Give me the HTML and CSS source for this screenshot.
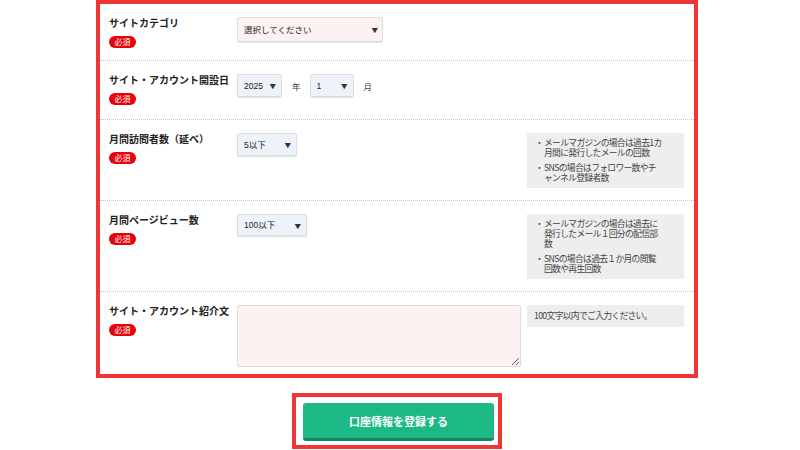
FILE: index.html
```html
<!DOCTYPE html>
<html>
<head>
  <title>サイト情報登録</title>
  <link rel="stylesheet" href="styles.css">
</head>
<body>
  <div class="page">
    <div class="form-box">

      <div class="row">
        <div class="label">
          <p class="label-text">サイトカテゴリ</p>
          <span class="badge">必須</span>
        </div>
        <div class="field">
          <div class="select sel-cat pink">
            <select><option>選択してください</option></select>
          </div>
        </div>
      </div>

      <div class="row row-date">
        <div class="label">
          <p class="label-text">サイト・アカウント開設日</p>
          <span class="badge">必須</span>
        </div>
        <div class="field date-field">
          <div class="select sel-year">
            <select><option>2025</option></select>
          </div>
          <span class="unit">年</span>
          <div class="select sel-month">
            <select><option>1</option></select>
          </div>
          <span class="unit">月</span>
        </div>
      </div>

      <div class="row">
        <div class="label">
          <p class="label-text">月間訪問者数（延べ）</p>
          <span class="badge">必須</span>
        </div>
        <div class="field">
          <div class="select sel-visit">
            <select><option>5以下</option></select>
          </div>
        </div>
        <div class="note">
          <ul>
            <li>メールマガジンの場合は過去1カ<br>月間に発行したメールの回数</li>
            <li>SNSの場合はフォロワー数やチ<br>ャンネル登録者数</li>
          </ul>
        </div>
      </div>

      <div class="row">
        <div class="label">
          <p class="label-text">月間ページビュー数</p>
          <span class="badge">必須</span>
        </div>
        <div class="field">
          <div class="select sel-pv">
            <select><option>100以下</option></select>
          </div>
        </div>
        <div class="note">
          <ul>
            <li>メールマガジンの場合は過去に<br>発行したメール１回分の配信部<br>数</li>
            <li>SNSの場合は過去１か月の閲覧<br>回数や再生回数</li>
          </ul>
        </div>
      </div>

      <div class="row row-text">
        <div class="label">
          <p class="label-text">サイト・アカウント紹介文</p>
          <span class="badge">必須</span>
        </div>
        <div class="field">
          <textarea class="intro"></textarea>
        </div>
        <div class="note">
          <p class="note-text">100文字以内でご入力ください。</p>
        </div>
      </div>

    </div>

    <div class="submit-wrap">
      <button class="submit">口座情報を登録する</button>
    </div>
  </div>
</body>
</html>
```

FILE: styles.css
```css
body{
 margin: 0;
 background-color: #fff;
 color: #222;
 font-family: "Noto Sans CJK JP", sans-serif;
}
.page{
 width: 602px;
 margin-left: 96px;
}
.form-box{
 border: 4px solid #f03535;
}
.row{
 display: grid;
 grid-template-columns: 122px 284px 157px;
 column-gap: 6px;
 align-items: start;
 padding: 13px 10px 12px 9px;
 border-bottom: 1px dotted #c8c8c8;
}
.row:last-child{
 border-bottom: none;
}
.row-date{
 padding-bottom: 14px;
}
.row-text{
 padding-bottom: 7px;
}
.label-text{
 margin: 0;
 font-size: 10px;
 line-height: 11px;
 font-weight: bold;
 color: #222;
 white-space: nowrap;
}
.badge{
 display: block;
 width: 27px;
 margin-top: 8px;
 height: 12px;
 line-height: 12px;
 font-size: 8px;
 text-align: center;
 color: #fff;
 background-color: #e8000b;
 border-radius: 6px;
}
.field{
 display: flex;
 align-items: center;
}
.date-field .unit{
 font-size: 8.5px;
 color: #444;
 margin: 0 9px 0 10px;
}
.select{
 position: relative;
 height: 23px;
}
.select::after{
 content: "▼";
 position: absolute;
 right: 6px;
 top: 8px;
 font-size: 6.5px;
 line-height: 8px;
 color: #333;
 pointer-events: none;
}
.select select{
 display: block;
 appearance: none;
 -webkit-appearance: none;
 width: 100%;
 height: 100%;
 margin: 0;
 padding: 0 14px 0 6px;
 border: 1px solid #dedede;
 border-radius: 2px;
 box-shadow: 0 1px 1px rgba(0,0,0,0.12);
 background-color: #edf3f8;
 color: #222;
 font-family: "Liberation Sans", "Noto Sans CJK JP", sans-serif;
 font-size: 8.5px;
}
.select.pink select{
 background-color: #fdf1f1;
}
.sel-cat{
 width: 146px;
 height: 25px;
}
.sel-cat::after{
 top: 9px;
 right: 5px;
}
.sel-year{
 width: 45px;
}
.sel-month{
 width: 44px;
}
.sel-visit{
 width: 60px;
}
.sel-pv{
 width: 70px;
 height: 22px;
}
.intro{
 display: block;
 width: 284px;
 height: 62px;
 margin: 0;
 box-sizing: border-box;
 border: 1px solid #dcdcdc;
 border-radius: 2px;
 background-color: #fdf1f1;
}
.note{
 background-color: #eeeeee;
 padding: 5px 6px 5px 8px;
 font-size: 8.8px;
 line-height: 10px;
 letter-spacing: -0.7px;
 color: #444;
}
.note ul{
 list-style: none;
 margin: 0;
 padding: 0;
}
.note li{
 padding-left: 9px;
 text-indent: -9px;
 white-space: nowrap;
}
.note li::before{
 content: "・";
 display: inline-block;
 width: 9px;
 text-indent: 0;
}
.note li + li{
 margin-top: 5px;
}
.note-text{
 margin: 0;
 padding: 1px 0;
 margin-left: -1px;
}
.submit-wrap{
 width: 210px;
 box-sizing: border-box;
 margin: 15px auto 0;
 padding: 6px 4px 4px 7px;
 border: 4px solid #f03535;
}
.submit{
 display: block;
 width: 191px;
 height: 38px;
 border: none;
 border-bottom: 3px solid #12885f;
 border-radius: 3px;
 background-color: #1cb886;
 color: #fff;
 font-family: "Noto Sans CJK JP", sans-serif;
 font-size: 11px;
 font-weight: bold;
}
```
